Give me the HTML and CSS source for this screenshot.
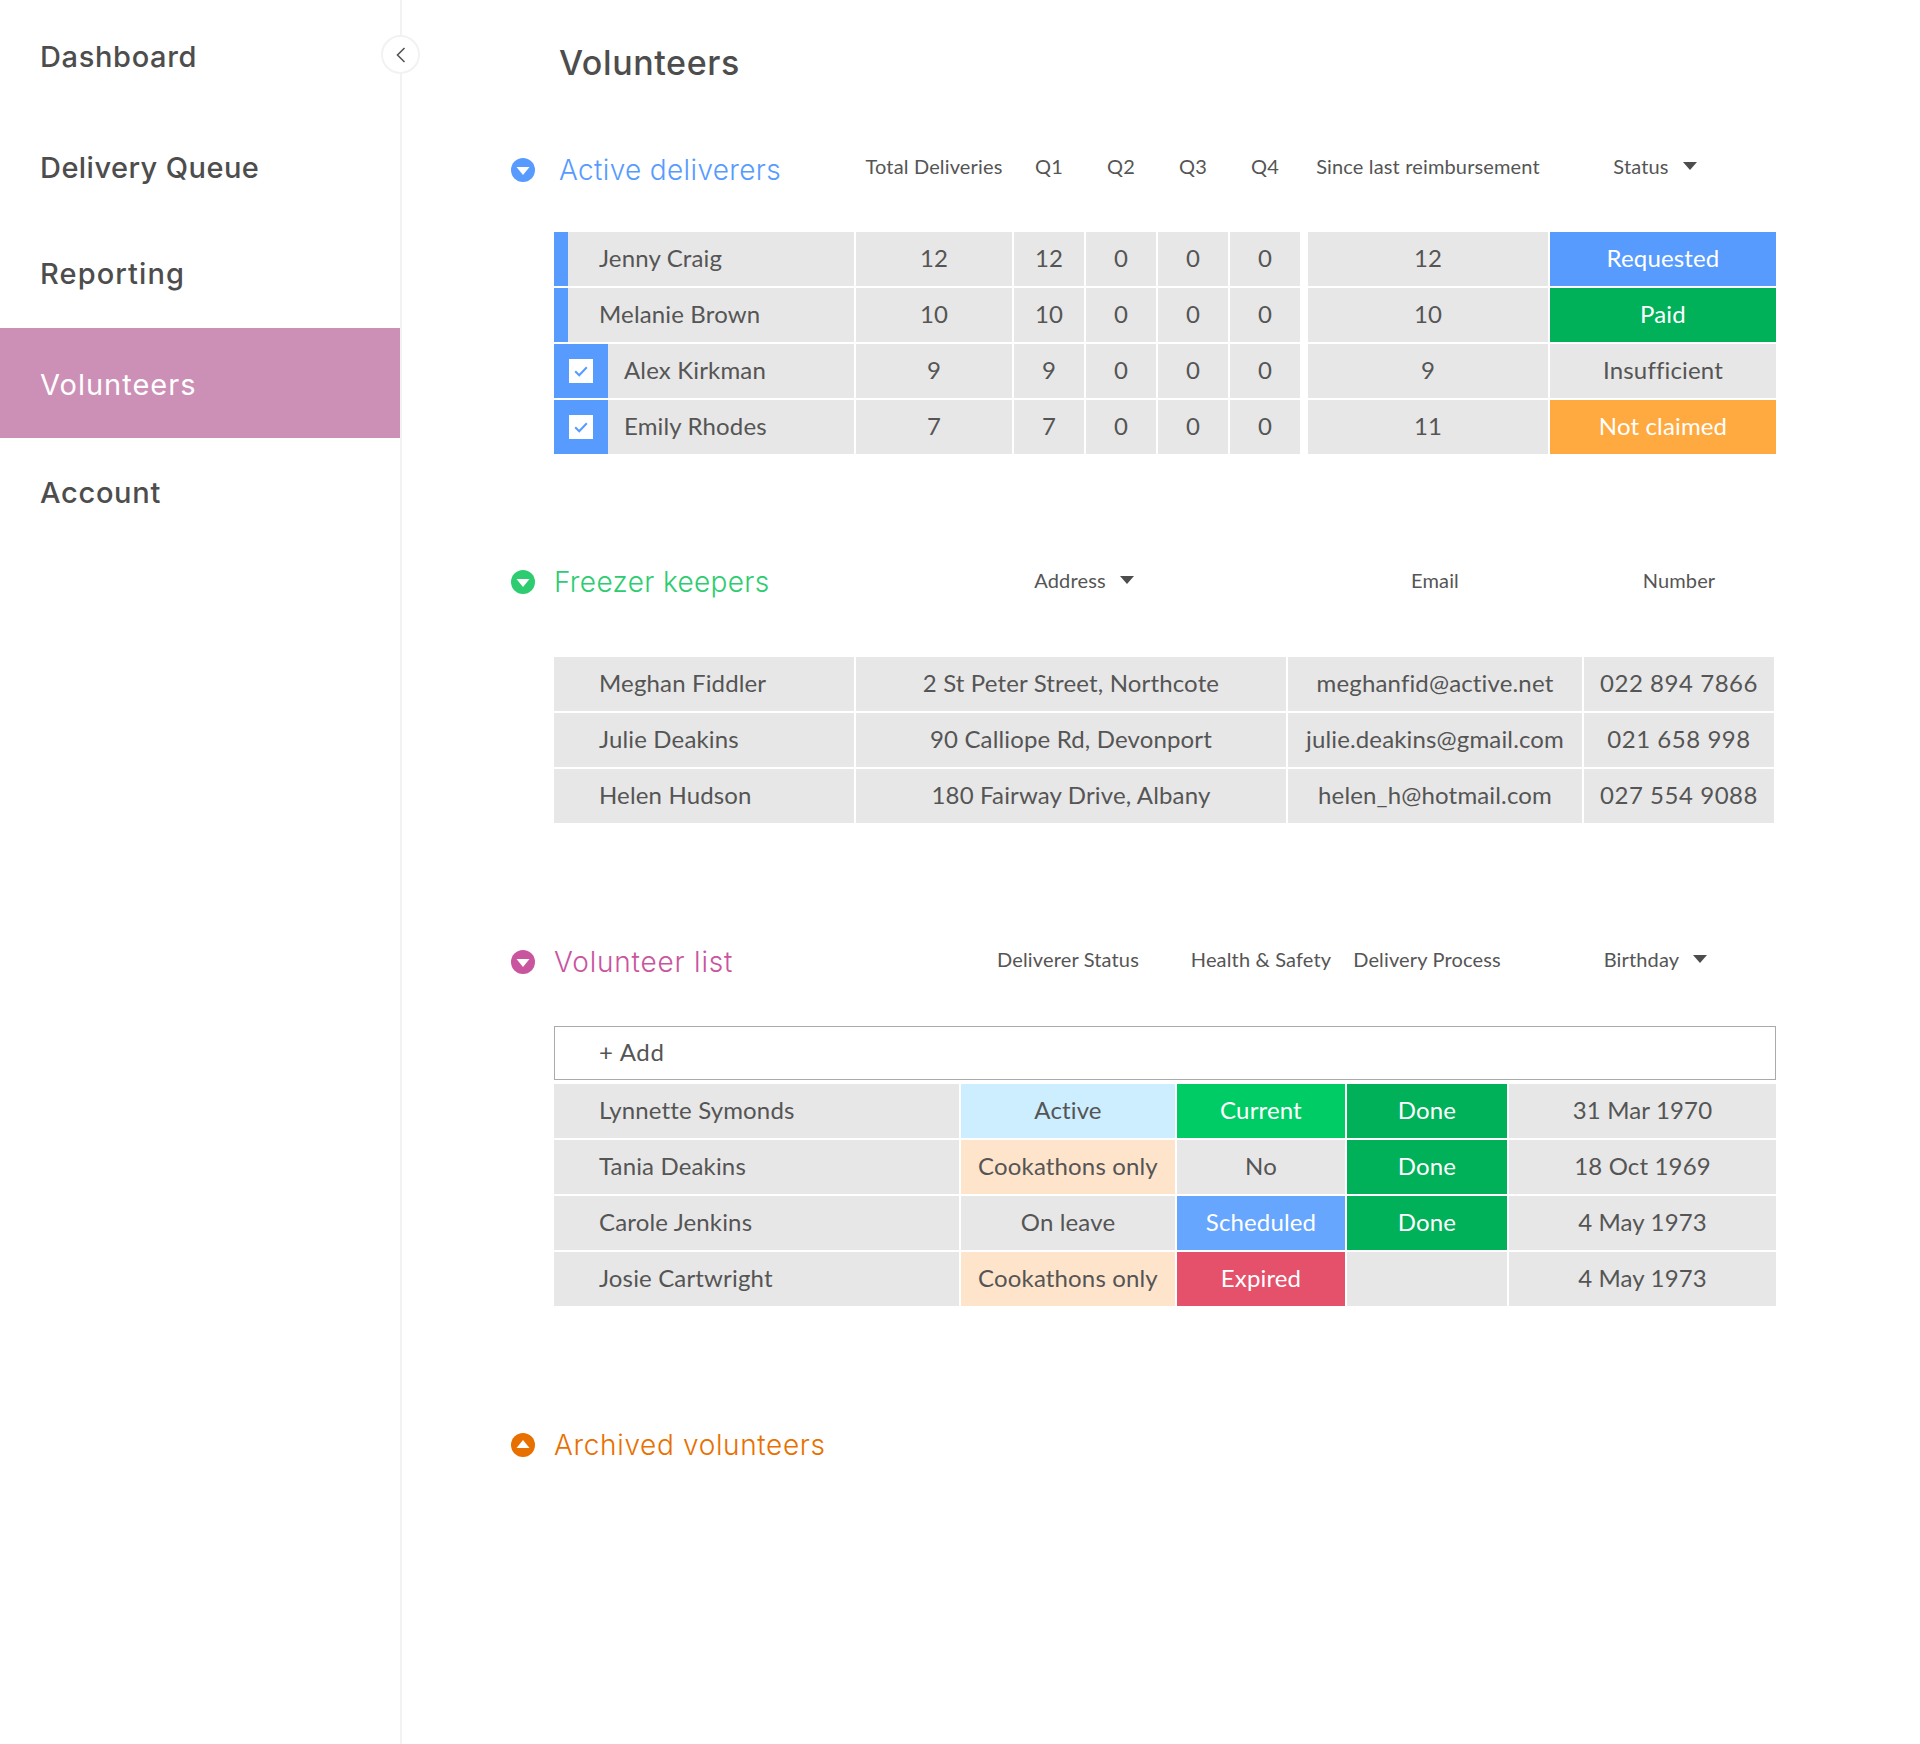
FILE: index.html
```html
<!DOCTYPE html>
<html lang="en">
<head>
<meta charset="utf-8">
<title>Volunteers</title>
<link rel="stylesheet" href="styles.css">
</head>
<body>
<div class="app">
  <nav class="sidebar">
    <a class="nav-item n-dash">Dashboard</a>
    <a class="nav-item n-queue">Delivery Queue</a>
    <a class="nav-item n-report">Reporting</a>
    <a class="nav-item active">Volunteers</a>
    <a class="nav-item n-account">Account</a>
    <button class="collapse" aria-label="Collapse"><svg width="10" height="16" viewBox="0 0 10 16"><path d="M8.5 1 L1.5 8 L8.5 15" fill="none" stroke="#555" stroke-width="1.6"/></svg></button>
  </nav>
  <main class="main">
    <h1 class="page-title">Volunteers</h1>

    <section class="section active-sec">
      <div class="grid head">
        <div class="sec-title blue wide"><svg class="disc" viewBox="0 0 24 24"><circle cx="12" cy="12" r="12" fill="currentColor"/><path d="M5.5 9 H18.5 L12 17 Z" fill="#fff"/></svg><span>Active deliverers</span></div>
        <div class="th">Total Deliveries</div><div class="th">Q1</div><div class="th">Q2</div><div class="th">Q3</div><div class="th">Q4</div>
        <div class="th gapped">Since last reimbursement</div>
        <div class="th pad-r">Status<i class="caret"></i></div>
      </div>
      <div class="grid body">
        <div class="td name bar"><span>Jenny Craig</span></div><div class="td">12</div><div class="td">12</div><div class="td">0</div><div class="td">0</div><div class="td">0</div><div class="td gapped">12</div><div class="td c-blue">Requested</div>
        <div class="td name bar"><span>Melanie Brown</span></div><div class="td">10</div><div class="td">10</div><div class="td">0</div><div class="td">0</div><div class="td">0</div><div class="td gapped">10</div><div class="td c-green">Paid</div>
        <div class="td name checked"><b class="check"><span class="box"><svg width="14" height="11" viewBox="0 0 14 11"><path d="M1.2 5.2 L5.2 9.2 L12.8 1.2" fill="none" stroke="#579bff" stroke-width="2"/></svg></span></b><span>Alex Kirkman</span></div><div class="td">9</div><div class="td">9</div><div class="td">0</div><div class="td">0</div><div class="td">0</div><div class="td gapped">9</div><div class="td">Insufficient</div>
        <div class="td name checked"><b class="check"><span class="box"><svg width="14" height="11" viewBox="0 0 14 11"><path d="M1.2 5.2 L5.2 9.2 L12.8 1.2" fill="none" stroke="#579bff" stroke-width="2"/></svg></span></b><span>Emily Rhodes</span></div><div class="td">7</div><div class="td">7</div><div class="td">0</div><div class="td">0</div><div class="td">0</div><div class="td gapped">11</div><div class="td c-orange">Not claimed</div>
      </div>
    </section>

    <section class="section freezer-sec">
      <div class="grid2 head">
        <div class="sec-title green"><svg class="disc" viewBox="0 0 24 24"><circle cx="12" cy="12" r="12" fill="currentColor"/><path d="M5.5 9 H18.5 L12 17 Z" fill="#fff"/></svg><span>Freezer keepers</span></div>
        <div class="th pad-l">Address<i class="caret"></i></div><div class="th">Email</div><div class="th">Number</div>
      </div>
      <div class="grid2 body">
        <div class="td name"><span>Meghan Fiddler</span></div><div class="td">2 St Peter Street, Northcote</div><div class="td">meghanfid@active.net</div><div class="td phone">022 894 7866</div>
        <div class="td name"><span>Julie Deakins</span></div><div class="td">90 Calliope Rd, Devonport</div><div class="td">julie.deakins@gmail.com</div><div class="td phone">021 658 998</div>
        <div class="td name"><span>Helen Hudson</span></div><div class="td">180 Fairway Drive, Albany</div><div class="td">helen_h@hotmail.com</div><div class="td phone">027 554 9088</div>
      </div>
    </section>

    <section class="section list-sec">
      <div class="grid3 head">
        <div class="sec-title pink"><svg class="disc" viewBox="0 0 24 24"><circle cx="12" cy="12" r="12" fill="currentColor"/><path d="M5.5 9 H18.5 L12 17 Z" fill="#fff"/></svg><span>Volunteer list</span></div>
        <div class="th">Deliverer Status</div><div class="th">Health &amp; Safety</div><div class="th">Delivery Process</div><div class="th pad-l">Birthday<i class="caret"></i></div>
      </div>
      <div class="add">+ Add</div>
      <div class="grid3 body">
        <div class="td name"><span>Lynnette Symonds</span></div><div class="td c-sky">Active</div><div class="td c-mint">Current</div><div class="td c-green">Done</div><div class="td">31 Mar 1970</div>
        <div class="td name"><span>Tania Deakins</span></div><div class="td c-peach">Cookathons only</div><div class="td">No</div><div class="td c-green">Done</div><div class="td">18 Oct 1969</div>
        <div class="td name"><span>Carole Jenkins</span></div><div class="td">On leave</div><div class="td c-sched">Scheduled</div><div class="td c-green">Done</div><div class="td">4 May 1973</div>
        <div class="td name"><span>Josie Cartwright</span></div><div class="td c-peach">Cookathons only</div><div class="td c-red">Expired</div><div class="td"></div><div class="td">4 May 1973</div>
      </div>
    </section>

    <section class="section archive-sec">
      <div class="sec-title orange"><svg class="disc" viewBox="0 0 24 24"><circle cx="12" cy="12" r="12" fill="currentColor"/><path d="M5.5 15 H18.5 L12 7 Z" fill="#fff"/></svg><span>Archived volunteers</span></div>
    </section>
  </main>
</div>
</body>
</html>
```

FILE: styles.css
```css
* { box-sizing: border-box; }
html, body { margin: 0; padding: 0; background: #fff; }
body { font-family: "Lato", "Open Sans", sans-serif; color: #555; }
.app { display: flex; min-height: 1744px; }

.sidebar { position: relative; flex: 0 0 402px; border-right: 2px solid #f2f2f2; display: flex; flex-direction: column; }
.nav-item { height: 110px; padding-left: 40px; display: flex; align-items: center; font-family: "Inter", "Noto Sans", sans-serif; font-weight: 500; font-size: 29px; letter-spacing: 0.65px; color: #4d4d4d; }
.nav-item.n-dash { padding-top: 2px; }
.nav-item.n-queue { height: 109px; padding-top: 6px; letter-spacing: 0.45px; }
.nav-item.n-report { height: 109px; letter-spacing: 1.1px; }
.nav-item.active { background: #cc8fb6; color: #fff; font-weight: 400; padding-top: 3px; letter-spacing: 1px; }
.nav-item.n-account { letter-spacing: 0.7px; padding-bottom: 2px; }
.collapse { position: absolute; top: 35px; left: 381px; width: 39px; height: 39px; border-radius: 50%; border: 2px solid #f2f2f2; background: #fff; padding: 0; display: flex; align-items: center; justify-content: center; }

.main { flex: 1; padding: 43px 0 0 109px; }
.page-title { margin: 0 0 65px 48px; height: 40px; line-height: 40px; font-family: "Inter", "Noto Sans", sans-serif; font-weight: 500; font-size: 34px; letter-spacing: 0.6px; color: #4d4d4d; }

.section.freezer-sec { margin-top: 108px; }
.section.list-sec { margin-top: 118px; }
.section.archive-sec { margin-top: 119px; }

.grid, .grid2, .grid3 { display: grid; column-gap: 2px; }
.grid { grid-template-columns: 343px 156px 70px 70px 70px 70px 246px 226px; }
.grid2 { grid-template-columns: 343px 430px 294px 190px; }
.grid3 { grid-template-columns: 448px 214px 168px 160px 267px; }
.head { height: 40px; align-items: center; }
.body { margin-left: 43px; row-gap: 2px; }
.grid.body { grid-template-columns: 300px 156px 70px 70px 70px 70px 246px 226px; margin-top: 44px; }
.grid2.body { grid-template-columns: 300px 430px 294px 190px; margin-top: 55px; }
.grid3.body { grid-template-columns: 405px 214px 168px 160px 267px; }

.sec-title { display: flex; align-items: center; gap: 19px; height: 40px; font-family: "Inter", "Noto Sans", sans-serif; font-weight: 300; font-size: 28px; letter-spacing: 0.35px; white-space: nowrap; }
.sec-title.wide { gap: 24px; padding-top: 3px; }
.disc { width: 24px; height: 24px; flex: none; }
.blue { color: #579bff; }
.green { color: #2ecc71; }
.pink { color: #c9559f; letter-spacing: 0.8px; padding-top: 1px; }
.orange { color: #e87000; letter-spacing: 0.65px; }

.th { display: flex; align-items: center; justify-content: center; white-space: nowrap; font-size: 20px; letter-spacing: 0.15px; padding-bottom: 4px; }
.th.gapped { margin-left: 6px; }
.th.pad-r { padding-right: 16px; }
.th.pad-l { padding-left: 26px; }
.caret { display: inline-block; margin-left: 14px; width: 0; height: 0; border-left: 7px solid transparent; border-right: 7px solid transparent; border-top: 8px solid #4d4d4d; }

.td { height: 54px; padding-bottom: 3px; background: #e7e7e7; display: flex; align-items: center; justify-content: center; font-size: 24px; letter-spacing: 0.15px; white-space: nowrap; }
.td.phone { letter-spacing: 0.55px; }
.td.gapped { margin-left: 6px; }
.td.name { justify-content: flex-start; padding-left: 45px; }
.td.bar { border-left: 14px solid #579bff; padding-left: 31px; }
.td.checked { padding-left: 0; padding-bottom: 0; }
.td.checked > span { padding-bottom: 3px; }
.check { flex: none; width: 54px; height: 54px; background: #579bff; display: flex; align-items: center; justify-content: center; margin-right: 16px; }
.box { width: 24px; height: 24px; background: #fff; display: flex; align-items: center; justify-content: center; }

.c-blue { background: #579bff; color: #fff; }
.c-green { background: #00b159; color: #fff; }
.c-orange { background: #ffaa40; color: #fff; }
.c-sky { background: #cceeff; }
.c-peach { background: #ffe4cc; }
.c-mint { background: #00cc66; color: #fff; }
.c-sched { background: #66a6ff; color: #fff; }
.c-red { background: #e5506a; color: #fff; }

.add { margin: 45px 0 4px 43px; height: 54px; width: 1222px; border: 1.5px solid #aaa; background: #fff; display: flex; align-items: center; padding: 0 0 3px 44px; font-size: 24px; letter-spacing: 0.7px; }
```
